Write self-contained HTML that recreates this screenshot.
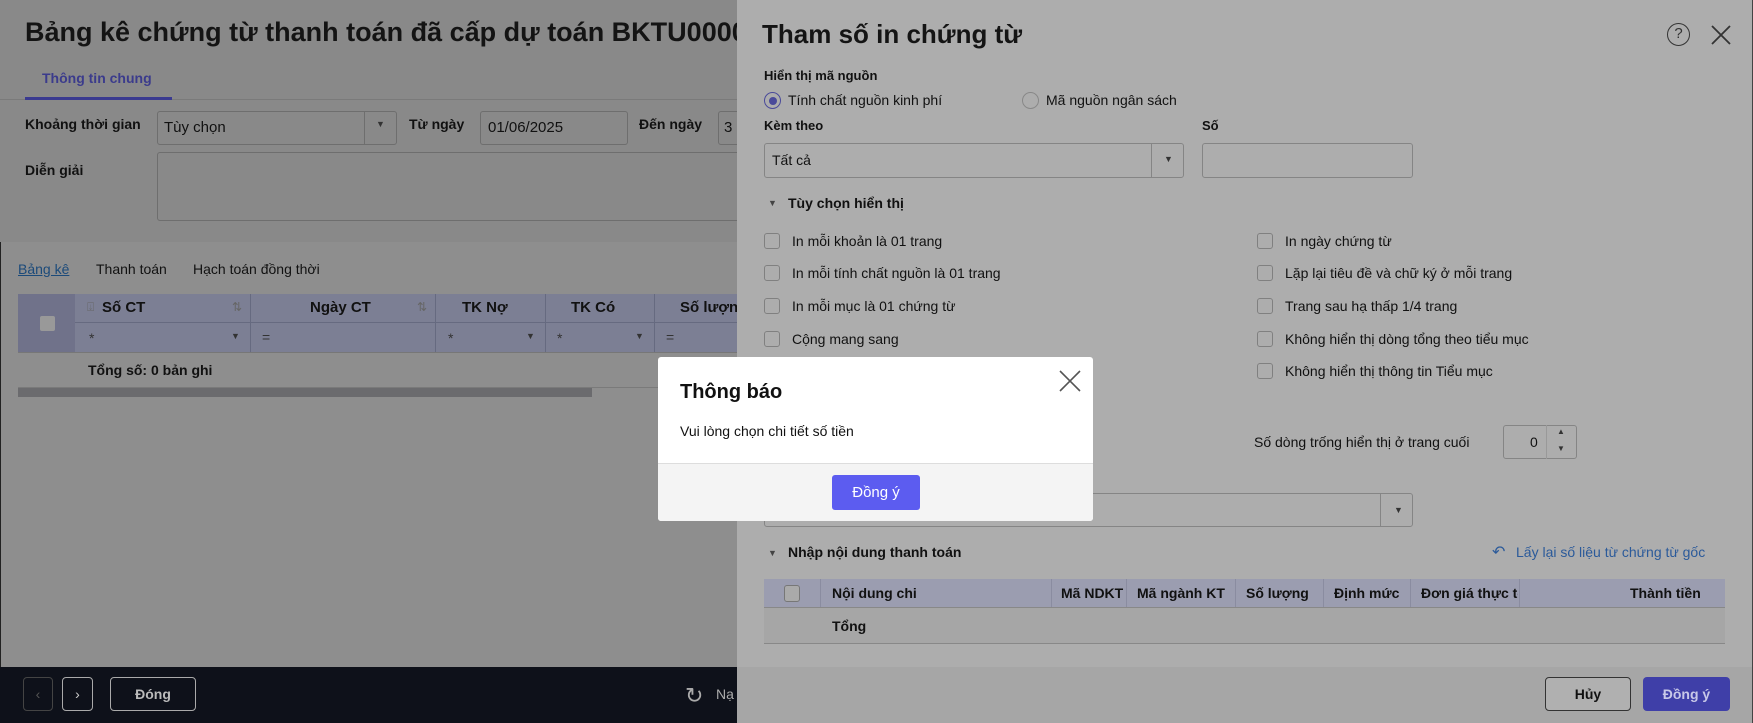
<!DOCTYPE html>
<html><head><meta charset="utf-8"><style>
*{box-sizing:border-box;margin:0;padding:0}
body{width:1753px;height:723px;overflow:hidden;position:relative;background:#8e8e8e;font-family:"Liberation Sans",sans-serif;font-size:14px;color:#111}
.a{position:absolute;white-space:nowrap}
.b{font-weight:bold}
.box{position:absolute;border:1px solid #6e6e6e;border-radius:3px}
.rbox{position:absolute;border:1px solid #858585;border-radius:3px}
.cb{position:absolute;width:16px;height:16px;border:1px solid #808080;border-radius:3px}
.hd{position:absolute;top:0;height:28px;border-right:1px solid #999bb0}
</style></head><body>
<div class="a" style="left:0;top:0;width:1px;height:723px;background:#222"></div>
<!-- left top area -->
<div class="a" style="left:0;top:0;width:737px;height:242px;background:#898989"></div>
<div class="a b" style="left:25px;top:17px;font-size:27px;color:#141414">Bảng kê chứng từ thanh toán đã cấp dự toán BKTU0000</div>
<div class="a b" style="left:42px;top:70px;color:#3b3b8c">Thông tin chung</div>
<div class="a" style="left:0;top:99px;width:737px;height:1px;background:#7a7a7a"></div>
<div class="a" style="left:25px;top:97px;width:147px;height:3px;background:#3a3a90"></div>
<div class="a b" style="left:25px;top:116px">Khoảng thời gian</div>
<div class="box" style="left:157px;top:111px;width:240px;height:34px"></div>
<div class="a" style="left:164px;top:119px;font-size:15px">Tùy chọn</div>
<div class="a" style="left:364px;top:111px;width:1px;height:34px;background:#6e6e6e"></div>
<div class="a" style="left:376px;top:119px;font-size:9px;color:#333">▼</div>
<div class="a b" style="left:409px;top:116px">Từ ngày</div>
<div class="box" style="left:480px;top:111px;width:148px;height:34px"></div>
<div class="a" style="left:488px;top:119px;font-size:15px">01/06/2025</div>
<div class="a b" style="left:639px;top:116px">Đến ngày</div>
<div class="box" style="left:718px;top:111px;width:40px;height:34px"></div>
<div class="a" style="left:724px;top:119px;font-size:15px">3</div>
<div class="a b" style="left:25px;top:162px">Diễn giải</div>
<div class="box" style="left:157px;top:152px;width:600px;height:69px"></div>
<div class="a" style="left:18px;top:261px;color:#1b4a7a;text-decoration:underline">Bảng kê</div>
<div class="a" style="left:96px;top:261px">Thanh toán</div>
<div class="a" style="left:193px;top:261px">Hạch toán đồng thời</div>
<!-- grid -->
<div class="a" style="left:18px;top:294px;width:719px;height:58px;background:#7c7f94"></div>
<div class="a" style="left:18px;top:294px;width:57px;height:58px;background:#70728a"></div>
<div class="a" style="left:40px;top:316px;width:15px;height:15px;background:#999;border-radius:2px"></div>
<div class="a" style="left:75px;top:322px;width:662px;height:1px;background:#666a80"></div>
<div class="a" style="left:18px;top:352px;width:719px;height:1px;background:#777"></div>
<div class="a" style="left:250px;top:294px;width:1px;height:58px;background:#666a80"></div>
<div class="a" style="left:435px;top:294px;width:1px;height:58px;background:#666a80"></div>
<div class="a" style="left:545px;top:294px;width:1px;height:58px;background:#666a80"></div>
<div class="a" style="left:654px;top:294px;width:1px;height:58px;background:#666a80"></div>
<div class="a" style="left:87px;top:300px;color:#666;font-size:12px">⍗</div>
<div class="a b" style="left:102px;top:299px;font-size:15px">Số CT</div>
<div class="a" style="left:232px;top:300px;color:#666;font-size:12px">⇅</div>
<div class="a b" style="left:310px;top:299px;font-size:15px">Ngày CT</div>
<div class="a" style="left:417px;top:300px;color:#666;font-size:12px">⇅</div>
<div class="a b" style="left:462px;top:299px;font-size:15px">TK Nợ</div>
<div class="a b" style="left:571px;top:299px;font-size:15px">TK Có</div>
<div class="a b" style="left:680px;top:299px;font-size:15px">Số lượng</div>
<div class="a" style="left:89px;top:330px;color:#333">*</div>
<div class="a" style="left:231px;top:331px;font-size:9px;color:#333">▼</div>
<div class="a" style="left:262px;top:329px;color:#333">=</div>
<div class="a" style="left:448px;top:330px;color:#333">*</div>
<div class="a" style="left:526px;top:331px;font-size:9px;color:#333">▼</div>
<div class="a" style="left:557px;top:330px;color:#333">*</div>
<div class="a" style="left:635px;top:331px;font-size:9px;color:#333">▼</div>
<div class="a" style="left:666px;top:329px;color:#333">=</div>
<div class="a b" style="left:88px;top:362px">Tổng số: 0 bản ghi</div>
<div class="a" style="left:18px;top:387px;width:719px;height:1px;background:#7a7a7a"></div>
<div class="a" style="left:18px;top:388px;width:574px;height:9px;background:#6b6b6e"></div>
<!-- bottom bar -->
<div class="a" style="left:0;top:667px;width:737px;height:56px;background:#0e111a"></div>
<div class="a" style="left:23px;top:677px;width:30px;height:34px;border:1px solid #444;border-radius:4px;color:#555;text-align:center;line-height:32px">‹</div>
<div class="a" style="left:62px;top:677px;width:31px;height:34px;border:1px solid #aaa;border-radius:4px;color:#ccc;text-align:center;line-height:32px">›</div>
<div class="a b" style="left:110px;top:677px;width:86px;height:34px;border:1px solid #aaa;border-radius:4px;color:#bbb;text-align:center;line-height:32px">Đóng</div>
<div class="a" style="left:685px;top:683px;font-size:22px;color:#aaa">↻</div>
<div class="a" style="left:716px;top:686px;color:#aaa">Nạ</div>
<!-- right panel -->
<div class="a" style="left:737px;top:0;width:1016px;height:667px;background:#adadad"></div>
<div class="a" style="left:737px;top:667px;width:1016px;height:56px;background:#a6a6a6"></div>
<div class="a" style="left:1752px;top:0;width:1px;height:723px;background:#444"></div>
<div class="a b" style="left:762px;top:19px;font-size:26px;color:#141414">Tham số in chứng từ</div>
<div class="a" style="left:1667px;top:23px;width:23px;height:23px;border:1.5px solid #333;border-radius:50%;text-align:center;line-height:20px;font-size:15px;color:#333">?</div>
<svg class="a" style="left:1710px;top:24px" width="22" height="22"><path d="M2 2L20 20M20 2L2 20" stroke="#333" stroke-width="1.8"/></svg>
<div class="a b" style="left:764px;top:68px;font-size:13px">Hiển thị mã nguồn</div>
<div class="a" style="left:764px;top:92px;width:17px;height:17px;border:1.5px solid #4a4a9a;border-radius:50%"></div>
<div class="a" style="left:768.5px;top:96.5px;width:8px;height:8px;background:#4a4a9a;border-radius:50%"></div>
<div class="a" style="left:788px;top:92px">Tính chất nguồn kinh phí</div>
<div class="a" style="left:1022px;top:92px;width:17px;height:17px;border:1px solid #888;border-radius:50%"></div>
<div class="a" style="left:1046px;top:92px">Mã nguồn ngân sách</div>
<div class="a b" style="left:764px;top:118px;font-size:13px">Kèm theo</div>
<div class="a b" style="left:1202px;top:118px;font-size:13px">Số</div>
<div class="rbox" style="left:764px;top:143px;width:420px;height:35px"></div>
<div class="a" style="left:772px;top:152px">Tất cả</div>
<div class="a" style="left:1151px;top:143px;width:1px;height:35px;background:#858585"></div>
<div class="a" style="left:1164px;top:154px;font-size:9px;color:#333">▼</div>
<div class="rbox" style="left:1202px;top:143px;width:211px;height:35px"></div>
<div class="a" style="left:768px;top:198px;font-size:9px;color:#444">▼</div>
<div class="a b" style="left:788px;top:195px">Tùy chọn hiển thị</div>
<div class="cb" style="left:764px;top:233px"></div><div class="a" style="left:792px;top:233px">In mỗi khoản là 01 trang</div>
<div class="cb" style="left:764px;top:265px"></div><div class="a" style="left:792px;top:265px">In mỗi tính chất nguồn là 01 trang</div>
<div class="cb" style="left:764px;top:298px"></div><div class="a" style="left:792px;top:298px">In mỗi mục là 01 chứng từ</div>
<div class="cb" style="left:764px;top:331px"></div><div class="a" style="left:792px;top:331px">Cộng mang sang</div>
<div class="a" style="left:792px;top:396px">Không hiển thị dòng tổng theo tiểu mục</div>
<div class="cb" style="left:1257px;top:233px"></div><div class="a" style="left:1285px;top:233px">In ngày chứng từ</div>
<div class="cb" style="left:1257px;top:265px"></div><div class="a" style="left:1285px;top:265px">Lặp lại tiêu đề và chữ ký ở mỗi trang</div>
<div class="cb" style="left:1257px;top:298px"></div><div class="a" style="left:1285px;top:298px">Trang sau hạ thấp 1/4 trang</div>
<div class="cb" style="left:1257px;top:331px"></div><div class="a" style="left:1285px;top:331px">Không hiển thị dòng tổng theo tiểu mục</div>
<div class="cb" style="left:1257px;top:363px"></div><div class="a" style="left:1285px;top:363px">Không hiển thị thông tin Tiểu mục</div>
<div class="a" style="left:1254px;top:434px">Số dòng trống hiển thị ở trang cuối</div>
<div class="rbox" style="left:1503px;top:425px;width:74px;height:34px"></div>
<div class="a" style="left:1530px;top:434px">0</div>
<div class="a" style="left:1546px;top:425px;width:1px;height:34px;background:#999"></div>
<div class="a" style="left:1557px;top:427px;font-size:8px;color:#333">▲</div>
<div class="a" style="left:1557px;top:444px;font-size:8px;color:#333">▼</div>
<div class="rbox" style="left:764px;top:493px;width:649px;height:34px"></div>
<div class="a" style="left:1380px;top:493px;width:1px;height:34px;background:#858585"></div>
<div class="a" style="left:1394px;top:505px;font-size:9px;color:#333">▼</div>
<div class="a" style="left:768px;top:548px;font-size:9px;color:#444">▼</div>
<div class="a b" style="left:788px;top:544px">Nhập nội dung thanh toán</div>
<div class="a" style="left:1492px;top:542px;color:#2b5a9a;font-size:16px">↶</div>
<div class="a" style="left:1516px;top:544px;color:#2b5a9a">Lấy lại số liệu từ chứng từ gốc</div>
<div class="a" style="left:764px;top:579px;width:961px;height:28px;background:#9b9db0"></div>
<div class="a" style="left:764px;top:607px;width:961px;height:1px;background:#888"></div>
<div class="a" style="left:764px;top:643px;width:961px;height:1px;background:#888"></div>
<div class="a" style="left:764px;top:608px;width:961px;height:35px;background:#a6a6a6"></div>
<div class="a" style="left:784px;top:585px;width:16px;height:17px;border:1px solid #777;border-radius:3px;background:#aaa"></div>
<div class="a" style="left:820px;top:579px;width:1px;height:28px;background:#8a8ca0"></div>
<div class="a" style="left:1051px;top:579px;width:1px;height:28px;background:#8a8ca0"></div>
<div class="a" style="left:1126px;top:579px;width:1px;height:28px;background:#8a8ca0"></div>
<div class="a" style="left:1235px;top:579px;width:1px;height:28px;background:#8a8ca0"></div>
<div class="a" style="left:1323px;top:579px;width:1px;height:28px;background:#8a8ca0"></div>
<div class="a" style="left:1410px;top:579px;width:1px;height:28px;background:#8a8ca0"></div>
<div class="a" style="left:1519px;top:579px;width:1px;height:28px;background:#8a8ca0"></div>
<div class="a b" style="left:832px;top:585px">Nội dung chi</div>
<div class="a b" style="left:1061px;top:585px">Mã NDKT</div>
<div class="a b" style="left:1137px;top:585px">Mã ngành KT</div>
<div class="a b" style="left:1246px;top:585px">Số lượng</div>
<div class="a b" style="left:1334px;top:585px">Định mức</div>
<div class="a b" style="left:1421px;top:585px;width:97px;overflow:hidden">Đơn giá thực tế</div>
<div class="a b" style="left:1630px;top:585px">Thành tiền</div>
<div class="a b" style="left:832px;top:618px">Tổng</div>
<div class="a b" style="left:1545px;top:677px;width:86px;height:34px;border:1px solid #333;border-radius:4px;text-align:center;line-height:32px;background:#b0b0b0">Hủy</div>
<div class="a b" style="left:1643px;top:677px;width:87px;height:34px;border-radius:4px;text-align:center;line-height:34px;background:#3f3fa8;color:#c8c8e8">Đồng ý</div>
<!-- dialog -->
<div class="a" style="left:658px;top:357px;width:435px;height:164px;background:#fff;border-radius:3px;overflow:hidden">
<div class="a b" style="left:22px;top:24px;font-size:20px;color:#111">Thông báo</div>
<svg class="a" style="left:401px;top:13px" width="22" height="22"><path d="M1 1L21 21M21 1L1 21" stroke="#555" stroke-width="1.6"/></svg>
<div class="a" style="left:22px;top:66px;color:#111">Vui lòng chọn chi tiết số tiền</div>
<div class="a" style="left:0;top:106px;width:435px;height:58px;background:#f4f4f4;border-top:1px solid #ddd"></div>
<div class="a" style="left:174px;top:118px;width:88px;height:35px;background:#5c5cf0;border-radius:3px;color:#fff;text-align:center;line-height:35px;font-size:15px">Đồng ý</div>
</div>
</body></html>
